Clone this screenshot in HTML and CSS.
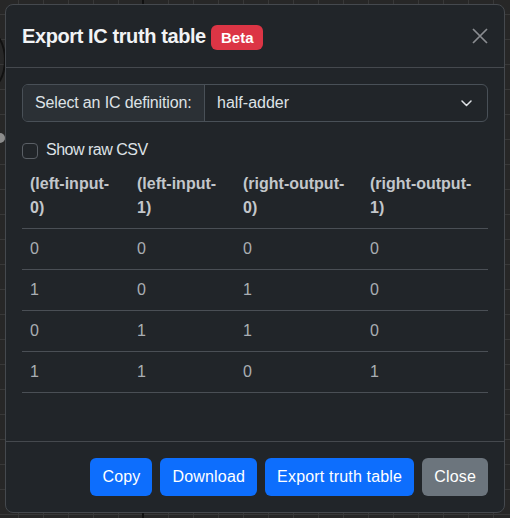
FILE: index.html
```html
<!DOCTYPE html>
<html lang="en">
<head>
<meta charset="utf-8">
<title>Export IC truth table</title>
<link rel="stylesheet" href="styles.css">
</head>
<body>
<div class="canvas">
  <div class="wire"></div>
  <div class="pin"></div>
  <div class="arc"></div>
  <div class="modal">
    <div class="modal-header">
      <h5 class="modal-title">Export IC truth table <span class="badge">Beta</span></h5>
      <button class="btn-close" aria-label="Close">
        <svg width="16" height="16" viewBox="0 0 16 16"><path d="M1 1L15 15M15 1L1 15" stroke="#8a8d91" stroke-width="1.7" fill="none"/></svg>
      </button>
    </div>
    <div class="modal-body">
      <div class="input-group">
        <span class="input-label">Select an IC definition:</span>
        <div class="select">
          <span>half-adder</span>
          <svg class="chev" width="11" height="7" viewBox="0 0 11 7"><path d="M1 1L5.5 5.5L10 1" stroke="#dee2e6" stroke-width="1.5" fill="none" stroke-linecap="round" stroke-linejoin="round"/></svg>
        </div>
      </div>
      <label class="form-check"><span class="check"></span>Show raw CSV</label>
      <table class="table">
        <colgroup><col class="c1"><col class="c2"><col class="c3"><col class="c4"></colgroup>
        <thead>
          <tr><th>(left-input-0)</th><th>(left-input-1)</th><th>(right-output-0)</th><th>(right-output-1)</th></tr>
        </thead>
        <tbody>
          <tr><td>0</td><td>0</td><td>0</td><td>0</td></tr>
          <tr><td>1</td><td>0</td><td>1</td><td>0</td></tr>
          <tr><td>0</td><td>1</td><td>1</td><td>0</td></tr>
          <tr><td>1</td><td>1</td><td>0</td><td>1</td></tr>
        </tbody>
      </table>
    </div>
    <div class="modal-footer">
      <button class="btn btn-primary">Copy</button>
      <button class="btn btn-primary">Download</button>
      <button class="btn btn-primary">Export truth table</button>
      <button class="btn btn-secondary">Close</button>
    </div>
  </div>
</div>
</body>
</html>
```
FILE: styles.css
```css
* { box-sizing: border-box; }
html, body { margin: 0; padding: 0; }
body {
  width: 510px;
  height: 518px;
  overflow: hidden;
  font-family: "Liberation Sans", Arial, sans-serif;
  font-size: 16px;
  line-height: 24px;
  color: #dee2e6;
  background:
    linear-gradient(to right, #383838 1px, transparent 1px) 18px 0 / 25px 25px,
    linear-gradient(to bottom, #383838 1px, transparent 1px) 0 14px / 25px 25px,
    #272727;
}
.canvas {
  position: relative;
  height: 518px;
  padding: 4px 5px 0 5px;
}
.wire {
  position: absolute;
  left: 142px;
  top: 0;
  width: 2px;
  height: 518px;
  background: #111;
}
.pin {
  position: absolute;
  left: -5px;
  top: 133px;
  width: 10px;
  height: 10px;
  border-radius: 50%;
  background: #8c8c8c;
}
.arc {
  position: absolute;
  left: -30px;
  top: 30px;
  width: 36px;
  height: 60px;
  border: 2px solid #111;
  border-radius: 50%;
}
.modal {
  position: relative;
  width: 500px;
  height: 509px;
  background: #212529;
  border: 1px solid #45494e;
  border-radius: 8px;
  display: flex;
  flex-direction: column;
}
.modal-header {
  height: 63px;
  flex: none;
  padding: 2px 16px 0 16px;
  border-bottom: 1px solid #45494e;
  display: flex;
  align-items: center;
  justify-content: space-between;
}
.modal-title {
  margin: 0;
  font-size: 20px;
  font-weight: 700;
  letter-spacing: -0.4px;
  line-height: 24px;
  color: #f1f3f5;
}
.badge {
  display: inline-block;
  font-size: 15px;
  line-height: 15px;
  letter-spacing: 0;
  padding: 5px 9px 5px 10px;
  border-radius: 6px;
  background: #dc3545;
  color: #fff;
  font-weight: 700;
}
.btn-close {
  width: 16px;
  height: 16px;
  padding: 0;
  margin: -2px 0 0 0;
  border: 0;
  background: transparent;
  display: flex;
}
.modal-body {
  flex: 1;
  padding: 16px;
}
.input-group {
  display: flex;
  height: 38px;
  border: 1px solid #495057;
  border-radius: 6px;
  overflow: hidden;
}
.input-label {
  flex: none;
  width: 182px;
  padding: 0 12px;
  background: #2b3035;
  border-right: 1px solid #495057;
  display: flex;
  align-items: center;
  color: #dee2e6;
  letter-spacing: -0.15px;
  white-space: nowrap;
}
.select {
  flex: 1;
  display: flex;
  align-items: center;
  justify-content: space-between;
  padding: 0 15px 0 12px;
}
.chev { margin-top: 1px; }
.form-check {
  display: flex;
  align-items: center;
  margin-top: 16px;
  margin-bottom: 2px;
  height: 24px;
  color: #dee2e6;
  letter-spacing: -0.5px;
}
.check {
  width: 16px;
  height: 16px;
  border: 1px solid #5a5f65;
  border-radius: 4px;
  margin-right: 8px;
  margin-top: 2px;
}
.table {
  width: 466px;
  border-collapse: collapse;
  table-layout: fixed;
}
.c1 { width: 107px; }
.c2 { width: 106px; }
.c3 { width: 127px; }
.c4 { width: 126px; }
.table th, .table td {
  padding: 8px;
  text-align: left;
  vertical-align: top;
  border-bottom: 1px solid #4a4f55;
  line-height: 24px;
}
.table th {
  font-weight: 700;
  color: #c3c7cb;
}
.table td {
  color: #a9aeb3;
}
.modal-footer {
  flex: none;
  height: 71px;
  border-top: 1px solid #45494e;
  padding: 16px 16px 0 16px;
  display: flex;
  justify-content: flex-end;
  align-items: flex-start;
  gap: 8px;
}
.btn {
  height: 38px;
  padding: 0 12px;
  border: 0;
  border-radius: 6px;
  font-family: inherit;
  font-size: 16px;
  line-height: 24px;
  letter-spacing: 0.18px;
  color: #fff;
}
.btn-primary { background: #0d6efd; }
.btn-secondary { background: #6c757d; }
```
